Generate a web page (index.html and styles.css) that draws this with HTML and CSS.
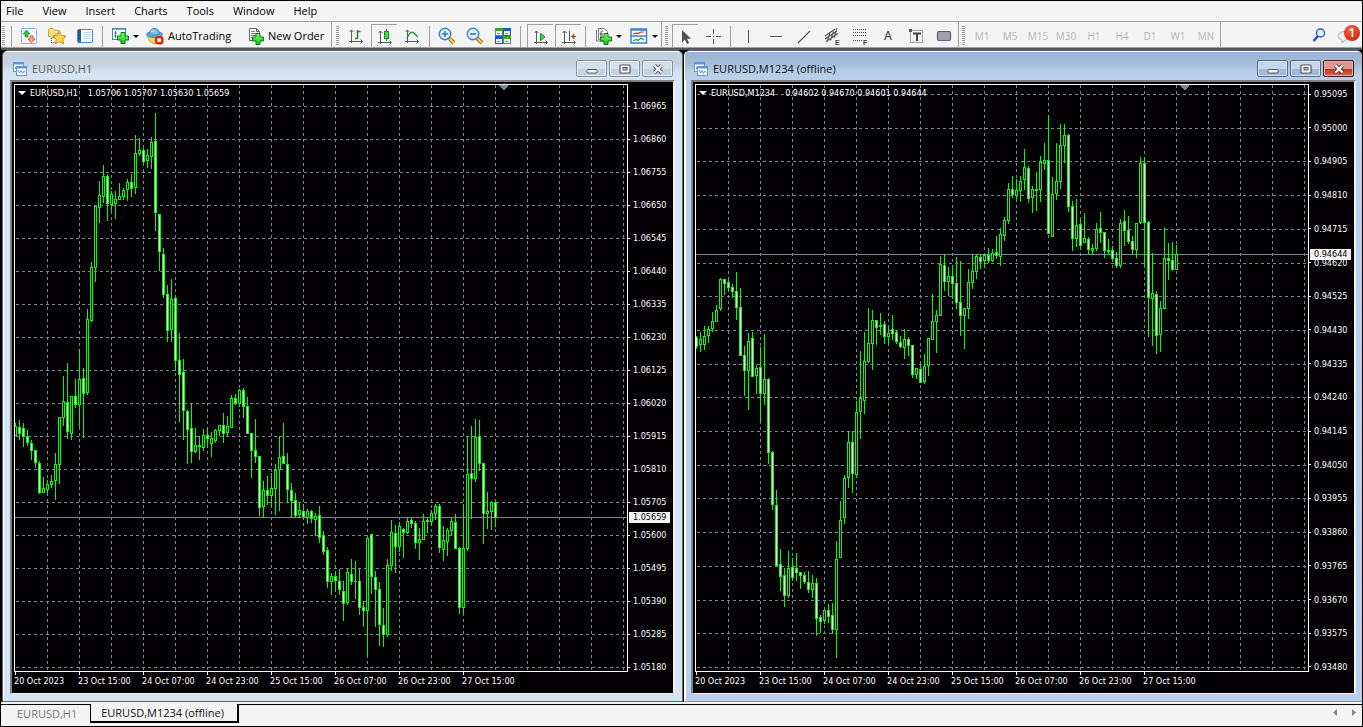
FILE: index.html
```html
<!DOCTYPE html>
<html lang="en">
<head>
<meta charset="utf-8">
<title>EURUSD,M1234 (offline)</title>
<link rel="stylesheet" href="styles.css">
</head>
<body>
<svg class="defs" aria-hidden="true">
  <defs>
    <linearGradient id="plusFill" x1="0" y1="0" x2="0" y2="1"><stop offset="0" stop-color="#7dff6a"/><stop offset="1" stop-color="#0fc41c"/></linearGradient>
    <symbol id="plus" viewBox="0 0 12 12"><path d="M4 .5h4V4h3.500v4H8v3.500H4V8H.5V4H4z" fill="url(#plusFill)" stroke="#0a7a12"/></symbol>
    <symbol id="chartwin" viewBox="0 0 14 14">
      <rect x=".5" y=".5" width="10" height="9" fill="#fff" stroke="#5c96e0"/><path d="M1 1.500h9" stroke="#5c96e0" stroke-width="2"/><path d="M2.500 7V5M4.500 6V4M6.500 5V4" stroke="#5c96e0"/>
      <rect x="3.500" y="4.500" width="10" height="9" fill="#fff" stroke="#5c96e0"/><path d="M4 5.500h9" stroke="#5c96e0" stroke-width="2"/><path d="M5 8l1.500 3L8 8.500 9.500 11.500 11 9l1 1.500" fill="none" stroke="#5c96e0"/>
    </symbol>
    <symbol id="axes" viewBox="0 0 16 16"><path d="M3.500 2v13M1 13.500h13M1.500 4l2-2 2 2M12.500 11.500l2 2-2 2" fill="none" stroke="#5a5a5a"/></symbol>
  </defs>
</svg>

<nav class="menubar">
  <button>File</button><button>View</button><button>Insert</button><button>Charts</button><button>Tools</button><button>Window</button><button>Help</button>
</nav>

<div class="toolbar">
  <div class="group">
    <span class="grip"></span><span class="sep"></span>
    <button class="tool" aria-label="Market Watch"><svg width="18" height="18" viewBox="0 0 18 18"><rect x="1.500" y="1.500" width="15" height="15" rx="1" fill="#fdfdff" stroke="#7fb2e0"/><path d="M6.500 3l3.500 4H8v3H5V7H3z" fill="#2fc23a" stroke="#0f8a1c" stroke-width=".7"/><path d="M11.500 15.500L8 12h2V9h3v3h2z" fill="#ffb09a" stroke="#e0401f" stroke-width=".9"/></svg></button>
    <button class="tool" aria-label="Navigator"><svg width="20" height="18" viewBox="0 0 20 18"><path d="M1.500 9.500v-7l1-1h4l1 2h4.500v3h-3l-2 4z" fill="#f8df84" stroke="#c9a13a"/><path d="M4.500 11v6M4.500 15.500h3" stroke="#555" stroke-dasharray="1 1"/><path d="M12.500 4.500l2 4 4.500.6-3.300 3.100.8 4.500-4-2.200-4 2.200.8-4.500L6 9.100l4.500-.6z" fill="#ffd84f" stroke="#b98a1e"/></svg></button>
    <button class="tool" aria-label="Terminal"><svg width="18" height="18" viewBox="0 0 18 18"><rect x="1.500" y="2.500" width="15" height="13" rx="1.500" fill="#fff" stroke="#4a87c4"/><path d="M3.500 2.500v13" stroke="#2c639f" stroke-width="3"/><path d="M2 5h3M2 8h3M2 11h3" stroke="#173d6d"/><path d="M7 5.500h8M7 7.500h8M7 9.500h8M7 11.500h8" stroke="#c3dbf2"/></svg></button>
    <span class="sep"></span>
    <button class="tool combo" aria-label="New chart"><svg width="18" height="18" viewBox="0 0 18 18"><rect x="1.500" y="1.500" width="13" height="11" fill="#fdfeff" stroke="#3f86bb"/><path d="M2 2.500h12" stroke="#79b7e0"/><path d="M4.500 4v7M3 6h3M3 9h3" stroke="#5a7f96"/><use href="#plus" x="6" y="5" width="12" height="12"/></svg><i class="arrow"></i></button>
    <button class="tool wide auto"><svg width="18" height="18" viewBox="0 0 18 18"><path d="M1.500 8.500l2 6 5 2.500 6-3 1.500-5.500z" fill="#f2d35c" stroke="#cda738"/><ellipse cx="8.500" cy="7.500" rx="8" ry="3" fill="#5fa9dd" stroke="#3982bd"/><path d="M3.500 7C3.500-.5 13 -.5 13.500 7c-3 1.500-7 1.500-10 0z" fill="#7cc0ea" stroke="#3982bd"/><path d="M5 4h3" stroke="#c9e9fa" stroke-width="1.500"/><rect x="9" y="9" width="8.500" height="8.500" rx="3" fill="#d92a12"/><rect x="11.500" y="11.500" width="3.500" height="3.500" fill="#fff"/></svg>AutoTrading</button>
    <button class="tool wide order"><svg width="16" height="18" viewBox="0 0 16 18"><path d="M1.500 1.500h7l3 3v9h-10z" fill="#fff" stroke="#666"/><path d="M8.500 1.500v3h3" fill="none" stroke="#666"/><path d="M3 4.500h4M3 6.500h6M3 8.500h6M3 10.500h4" stroke="#777"/><use href="#plus" x="4" y="6" width="12" height="12"/></svg>New Order</button>
  </div>
  <div class="group charting">
    <span class="grip"></span>
    <button class="tool" aria-label="Bar chart"><svg width="16" height="16" viewBox="0 0 16 16"><use href="#axes" width="16" height="16"/><path d="M9.500 2v9M9.500 3.500h3M7 10.500h2" stroke="#1a8f28" stroke-width="1.500"/></svg></button>
    <button class="tool on" aria-label="Candlesticks"><svg width="16" height="16" viewBox="0 0 16 16"><use href="#axes" width="16" height="16"/><path d="M9.500 0v12" stroke="#1a8f28"/><rect x="7.500" y="2.500" width="4" height="7" fill="#37e048" stroke="#138a20"/></svg></button>
    <button class="tool" aria-label="Line chart"><svg width="16" height="16" viewBox="0 0 16 16"><use href="#axes" width="16" height="16"/><path d="M3 10c3-6 5-7 7-5l4 4" fill="none" stroke="#1a8f28" stroke-width="1.300"/></svg></button>
    <span class="sep"></span>
    <button class="tool" aria-label="Zoom in"><svg width="18" height="18" viewBox="0 0 18 18"><path d="M11 11l5 5" stroke="#a87912" stroke-width="4"/><path d="M11 11l5 5" stroke="#f3cf53" stroke-width="2"/><circle cx="7" cy="7" r="5.700" fill="#dff2ff" stroke="#3b86cc" stroke-width="1.500"/><path d="M4 7h6M7 4v6" stroke="#3d7f9c" stroke-width="1.600"/></svg></button>
    <button class="tool" aria-label="Zoom out"><svg width="18" height="18" viewBox="0 0 18 18"><path d="M11 11l5 5" stroke="#a87912" stroke-width="4"/><path d="M11 11l5 5" stroke="#f3cf53" stroke-width="2"/><circle cx="7" cy="7" r="5.700" fill="#dff2ff" stroke="#3b86cc" stroke-width="1.500"/><path d="M4 7h6" stroke="#3d7f9c" stroke-width="1.600"/></svg></button>
    <button class="tool" aria-label="Tile windows"><svg width="16" height="16" viewBox="0 0 16 16"><path d="M0 0h8v8H0zM8 8h8v8H8z" fill="#45a31f"/><path d="M8 0h8v8H8zM0 8h8v8H0z" fill="#1f55c8"/><path d="M1 3h6v4H1zM9 3h6v4H9zM1 11h6v4H1zM9 11h6v4H9z" fill="#eef6ff"/><path d="M2 5.500h3M10 5.500h3M2 13.500h3M10 13.500h3" stroke="#6b9ad0"/></svg></button>
    <span class="sep"></span>
    <span class="pair">
    <button class="tool on" aria-label="Auto scroll"><svg width="16" height="16" viewBox="0 0 16 16"><use href="#axes" width="16" height="16"/><path d="M7.500 4.500v7l4.500-3.500z" fill="#3ddb4c" stroke="#138a20"/></svg></button>
    <button class="tool on" aria-label="Chart shift"><svg width="16" height="16" viewBox="0 0 16 16"><use href="#axes" width="16" height="16"/><path d="M8.500 2v10" stroke="#1d5f9c"/><path d="M15 7.500h-3" stroke="#c03a15" stroke-width="1.500"/><path d="M10 7.500l3-3v6z" fill="#c03a15"/></svg></button>
    </span>
    <span class="sep"></span>
    <button class="tool combo" aria-label="Indicators"><svg width="18" height="18" viewBox="0 0 18 18"><path d="M4.500 1.500h6l3 3v8h-9z" fill="#fff" stroke="#777"/><path d="M2.500 3v11h9" fill="none" stroke="#777"/><path d="M9 4c-2-.5-2 1-2 3v4M5.500 7H9" fill="none" stroke="#444"/><use href="#plus" x="6" y="6" width="12" height="12"/></svg><i class="arrow"></i></button>
    <button class="tool combo" aria-label="Templates"><svg width="18" height="16" viewBox="0 0 18 16"><rect x="1" y="1" width="15.500" height="14" fill="#fff" stroke="#3a82c9" stroke-width="1.500"/><path d="M1 2h15.500M1 8h15.500" stroke="#3a82c9" stroke-width="1.500"/><path d="M3 6l3-1 2 .5L11 4h3" fill="none" stroke="#a5371d" stroke-width="1.200"/><path d="M3 13l3-1.500 2 1 3-2.500 3 2" fill="none" stroke="#2c9840" stroke-width="1.200"/></svg><i class="arrow"></i></button>
  </div>
  <div class="group">
    <span class="grip"></span>
    <button class="tool on" aria-label="Cursor"><svg width="16" height="16" viewBox="0 0 16 16"><path d="M4 1v12.500l3-3 2 4.500 2-1-2-4.300h4z" fill="#4d4d57"/></svg></button>
    <button class="tool" aria-label="Crosshair"><svg width="16" height="16" viewBox="0 0 16 16"><path d="M8.500 1v5M8.500 11v5M1 8.500h5M11 8.500h5M8 8.500h1" stroke="#555"/></svg></button>
    <span class="sep"></span>
    <button class="tool" aria-label="Vertical line"><svg width="16" height="16" viewBox="0 0 16 16"><path d="M8.500 2v13" stroke="#555"/></svg></button>
    <button class="tool" aria-label="Horizontal line"><svg width="16" height="16" viewBox="0 0 16 16"><path d="M2 8.500h12" stroke="#555"/></svg></button>
    <button class="tool" aria-label="Trendline"><svg width="16" height="16" viewBox="0 0 16 16"><path d="M2 15L14 3" stroke="#555" stroke-width="1.200"/></svg></button>
    <button class="tool" aria-label="Channel"><svg width="16" height="18" viewBox="0 0 16 18"><path d="M1 9L11 2M1 12L13 4M2 14.500L14 6.500M3 15l3-9M6.500 13.500l3-9M10 11l3-10" stroke="#55555c" stroke-width="1.100"/><text x="11" y="17.500" class="mini">E</text></svg></button>
    <button class="tool" aria-label="Fibonacci"><svg width="16" height="18" viewBox="0 0 16 18"><path d="M1 2.500h14M1 5.500h14M1 8.500h14M1 13.500h9" stroke="#555" stroke-dasharray="1 1"/><text x="11" y="17.500" class="mini">F</text></svg></button>
    <button class="tool letter" aria-label="Text">A</button>
    <button class="tool" aria-label="Text label"><svg width="16" height="16" viewBox="0 0 16 16"><rect x="2.500" y="2.500" width="12" height="12" fill="none" stroke="#555" stroke-dasharray="1 1"/><path d="M1 1h3v3H1z" fill="#555"/><path d="M5 5.500h8M9 5v8" stroke="#444" stroke-width="2"/></svg></button>
    <button class="tool" aria-label="Rectangle"><svg width="16" height="16" viewBox="0 0 16 16"><rect x="1.500" y="3.500" width="13" height="9" rx="1.500" fill="#a2a2aa" stroke="#5c5c62" stroke-width="1.200"/></svg></button>
  </div>
  <div class="group frames">
    <span class="grip"></span>
    <button disabled>M1</button><button disabled>M5</button><button disabled>M15</button><button disabled>M30</button><button disabled>H1</button><button disabled>H4</button><button disabled>D1</button><button disabled>W1</button><button disabled>MN</button>
  </div>
  <div class="right-tools">
    <button class="tool" aria-label="Search"><svg width="14" height="14" viewBox="0 0 14 14"><path d="M6 8l-4.500 5" stroke="#2450c0" stroke-width="2.600"/><circle cx="8.500" cy="5" r="4" fill="#e9f3ff" stroke="#2a5bd0" stroke-width="1.500"/></svg></button>
    <button class="tool chat" aria-label="Messages"><svg width="16" height="14" viewBox="0 0 16 14"><path d="M7 1.500c9-1 9 8 1 8.500l-3 3v-3C-.5 8.500 0 2.500 7 1.500z" fill="#ececec" stroke="#aaa"/></svg><span class="badge">1</span></button>
  </div>
</div>

<main class="desk">
  <section class="win">
    <header class="title"><svg width="14" height="14"><use href="#chartwin"/></svg><h2>EURUSD,H1</h2>
      <div class="caps">
        <button aria-label="Minimize"><svg width="12" height="10" viewBox="0 0 12 10"><rect x="1" y="5.500" width="10" height="3.500" rx="1" fill="#fff" stroke="#50565e"/></svg></button>
        <button aria-label="Maximize"><svg width="12" height="10" viewBox="0 0 12 10"><rect x="1" y="1" width="10" height="8" rx="1" fill="#fff" stroke="#50565e" stroke-width="1.200"/><rect x="4" y="3.500" width="4" height="2.500" fill="#b8c8da" stroke="#50565e"/></svg></button>
        <button aria-label="Close"><svg width="12" height="10" viewBox="0 0 12 10"><path d="M2.500 1.500l7 7M9.500 1.500l-7 7" stroke="#50565e" stroke-width="4"/><path d="M2.500 1.500l7 7M9.500 1.500l-7 7" stroke="#fff" stroke-width="2"/></svg></button>
      </div>
    </header>
    <div class="client" id="h1"></div>
  </section>
  <section class="win active">
    <header class="title"><svg width="14" height="14"><use href="#chartwin"/></svg><h2>EURUSD,M1234 (offline)</h2>
      <div class="caps">
        <button aria-label="Minimize"><svg width="12" height="10" viewBox="0 0 12 10"><rect x="1" y="5.500" width="10" height="3.500" rx="1" fill="#fff" stroke="#50565e"/></svg></button>
        <button aria-label="Maximize"><svg width="12" height="10" viewBox="0 0 12 10"><rect x="1" y="1" width="10" height="8" rx="1" fill="#fff" stroke="#50565e" stroke-width="1.200"/><rect x="4" y="3.500" width="4" height="2.500" fill="#b8c8da" stroke="#50565e"/></svg></button>
        <button class="close" aria-label="Close"><svg width="12" height="10" viewBox="0 0 12 10"><path d="M2.500 1.500l7 7M9.500 1.500l-7 7" stroke="#50404a" stroke-width="4"/><path d="M2.500 1.500l7 7M9.500 1.500l-7 7" stroke="#fff" stroke-width="2"/></svg></button>
      </div>
    </header>
    <div class="client" id="m1234"></div>
  </section>
</main>

<footer class="tabs">
  <button class="tab">EURUSD,H1</button><button class="tab current">EURUSD,M1234 (offline)</button>
  <div class="scroll"><button aria-label="Scroll left"><svg width="4" height="7"><path d="M4 0v7L0 3.500z" fill="#888"/></svg></button><button aria-label="Scroll right"><svg width="4" height="7"><path d="M0 0v7l4-3.500z" fill="#888"/></svg></button></div>
</footer>
<script src="charts.js"></script>
</body>
</html>
```
FILE: styles.css
```css
* { box-sizing: border-box; }
body {
  margin: 0;
  min-height: 100vh;
  display: flex;
  flex-direction: column;
  border: 1px solid #000;
  background: #f4f4f4;
  color: #000;
  font-family: "Open Sans", "Noto Sans", sans-serif;
  font-size: 11px;
  line-height: 16px;
}
button { margin: 0; padding: 0; border: 0; background: none; font: inherit; color: inherit; }
.defs { position: absolute; width: 0; height: 0; }

.menubar { display: flex; height: 21px; border-bottom: 1px solid #a0a0a0; }
.menubar button { padding: 0 10px 0 9px; }
.menubar button:first-child { padding-left: 5px; }

.toolbar { display: flex; height: 28px; border-bottom: 2px solid #555; box-shadow: inset 0 -1px #a0a0a0; }
.group { display: flex; align-items: center; padding-top: 2px; border-right: 1px solid #a0a0a0; }
.group + .group { padding-left: 2px; }
.group + .charting { padding-left: 3px; }
.grip {
  width: 3px;
  height: 20px;
  margin: 0 3px 0 1px;
  background: repeating-linear-gradient(#a0a0a0 0 1px, transparent 1px 2px);
}
.sep { width: 1px; height: 21px; margin: 0 3px; background: #a0a0a0; }
.tool { display: flex; align-items: center; justify-content: center; width: 28px; height: 24px; }
.tool.on { width: 26px; margin: 0 1px; border-top: 1px solid #a0a0a0; border-left: 1px solid #a0a0a0; }
.tool.combo { width: 36px; gap: 4px; padding-left: 2px; }
.arrow { border: 3px solid transparent; border-top-color: #000; border-bottom: 0; }
.tool.wide { gap: 4px; justify-content: flex-start; white-space: nowrap; padding-left: 4px; }
.tool.auto { width: 102px; }
.tool.order { width: 87px; }
.pair { display: flex; padding-left: 2px; }
.letter { font-weight: 600; font-size: 12px; color: #555; }
.mini { font: bold 7px "Liberation Sans", sans-serif; fill: #444; }
.frames button { width: 28px; font-size: 10px; color: #b4b4b4; }
.right-tools { display: flex; align-items: center; gap: 3px; margin-left: auto; }
.right-tools .tool { width: 24px; }
.right-tools .chat { position: relative; justify-content: flex-start; width: 28px; padding: 4px 0 0 3px; }
.badge {
  position: absolute;
  top: 2px;
  right: 2px;
  width: 16px;
  height: 16px;
  border-radius: 50%;
  background: radial-gradient(circle at 40% 30%, #f0603e, #cf1c08);
  color: #fff;
  font-size: 12px;
  font-weight: 600;
}

.desk { display: flex; flex: 1; background: #000; gap: 1px; padding-left: 1px; }
.win {
  flex: 1;
  min-width: 0;
  display: flex;
  flex-direction: column;
  padding: 0 7px 7px;
  background: #d6e5f3;
  border: 1px solid #666;
  border-radius: 6px 6px 0 0;
  box-shadow: inset 1px 1px #fff;
}
.win.active { padding: 0 6px 7px; background: #bad0ea; border-color: #5a6a7a #22b8d8 #22b8d8 #fff; border-right: 0; }
.title {
  display: flex;
  align-items: center;
  gap: 5px;
  height: 29px;
  margin: 0 -7px;
  padding: 6px 9px 0 10px;
  border-radius: 5px 5px 0 0;
  background: linear-gradient(#fff 0 1px, #c2cfdd 1px, #c6d4e2 14px, #d3e2f0 20px, #d6e5f3);
}
.active .title { margin: 0 -6px; padding: 6px 8px 0 9px; background: linear-gradient(#fff 0 1px, #9ab5d2 1px, #a3bddb 14px, #b6cde8 20px, #bad0ea); }
.title h2 { margin: 0; font: inherit; color: #555; white-space: nowrap; }
.active .title h2 { color: #111; }
.caps { display: flex; gap: 2px; margin-left: auto; }
.caps button {
  display: flex;
  align-items: center;
  justify-content: center;
  width: 31px;
  height: 17px;
  border: 1px solid #8493a8;
  border-radius: 2px;
  background: linear-gradient(#d3dfea 50%, #c4d2e0 50%);
  box-shadow: inset 0 0 0 1px #e6eef6;
}
.active .caps button { border-color: #566a88; background: linear-gradient(#c5d6e9 50%, #9fb9d6 50%); box-shadow: inset 0 0 0 1px #d5e2f0; }
.active .caps .close { border-color: #4a1518; background: linear-gradient(#dc9a8c 50%, #b8321c 50%, #d06a4c); box-shadow: inset 0 0 0 1px #e8b0a4; }

.client {
  flex: 1;
  display: grid;
  grid-template-columns: 1fr 45px;
  grid-template-rows: auto 1fr;
  padding: 2px 0 0 2px;
  background: #020003;
  color: #fff;
  border: 2px solid #808080;
  border-right-color: #f0f0f0;
  border-bottom: 1px solid #f0f0f0;
  font: 9px/10px "DejaVu Sans Condensed", "Open Sans", sans-serif;
  white-space: nowrap;
}
.plot { position: relative; min-width: 0; border: 1px solid #fff; }
.plot svg { display: block; shape-rendering: crispEdges; }
.quote { position: absolute; top: 3px; left: 3px; display: flex; align-items: center; margin: 0; }
.quote i { margin-right: 4px; border: 4px solid transparent; border-top-color: #fff; border-bottom: 0; }
.quote b { margin-right: 10px; font-weight: 400; }
.prices { position: relative; display: flex; flex-direction: column; justify-content: space-between; padding-top: 17px; }
.active .prices { padding-top: 5px; }
.prices span { padding-left: 5px; background: linear-gradient(#fff, #fff) no-repeat 0 50% / 2px 1px; }
.prices .now { position: absolute; left: 1px; width: 41px; padding-left: 4px; background: #f4f4f4; color: #000; line-height: 11px; }
.times { display: flex; grid-column: 1 / -1; height: 20px; overflow: hidden; }
.times span { width: 64px; padding-top: 4px; background: linear-gradient(#fff, #fff) no-repeat 1px 0 / 1px 3px; }

.tabs { display: flex; height: 24px; background: linear-gradient(#f4f4f4 0 2px, #000 2px 3px, #f4f4f4 3px); }
.tab { margin-top: 2px; height: 19px; padding: 1px 13px 0 10px; color: #777; }
.tab:first-child { padding: 1px 13px 0 16px; }
.tab.current { background: #f4f4f4; color: #111; border: 1px solid #000; border-top: 0; border-right-width: 2px; border-bottom-width: 2px; }
.scroll { display: flex; align-items: center; gap: 15px; margin-left: auto; padding: 0 6px 4px 0; }
.scroll button { display: flex; }
```
FILE: charts.js
```js
// Bars are [high, body top, body bottom, low, falling?] in thirds of a pixel,
// measured down from the "from" line of their block.
const charts = {
  h1: {
    symbol: 'EURUSD,H1', quote: '1.05706 1.05707 1.05630 1.05659',
    now: '1.05659', nowY: 432,
    high: 1.06965, step: 0.00105, gridTop: 21, gridEnd: 582,
    blocks: [
      { from: 15, bars: [
        [969,979,1006,1006,0],[960,982,1000,1018,1],[970,985,1010,1040,1],[990,1009,1028,1036,1],[1020,1030,1051,1079,1],[1051,1051,1088,1103,1],
        [1084,1090,1178,1181,1],[1131,1165,1177,1177,0],[1141,1153,1168,1178,0],[1125,1144,1154,1163,0],[1060,1093,1142,1199,0],[951,952,1094,1151,0],
        [829,904,952,977,0],[790,907,994,1016,1],[889,889,1000,1018,0],[838,889,914,922,1],[748,838,913,979,0],[805,835,881,1013,1],
        [627,658,878,884,0],[487,502,661,665,0],[319,319,502,545,0],[244,286,322,368,0],[196,229,290,307,0],[223,229,310,362,1],
        [274,283,314,332,0],[274,298,310,356,0],[250,289,298,298,0],[265,271,290,298,0],[238,247,268,302,0],[223,247,266,290,1],
        [106,160,262,280,0],[115,151,160,166,0],[145,151,185,188,1],[148,166,182,203,0],[112,127,170,206,0],[40,124,338,391,1],
        [343,343,455,512,1],[446,463,584,592,1],[557,583,692,725,1],[538,598,689,725,0],[586,595,782,812,1],[700,781,824,965,1],
        [778,817,932,1018,1],[931,934,989,1091,1],[910,985,1055,1088,1],[985,1036,1055,1058,0],[1010,1036,1040,1079,0],[988,1006,1043,1052,0],
        [982,1006,1016,1036,1],[997,1015,1031,1070,0],[988,991,1022,1027,0],[976,976,991,1007,0],[940,976,1000,1028,1],[949,979,997,1006,0],
        [886,895,982,982,0],[882,895,910,913,1],[868,871,910,920,0],[865,871,919,952,1],[892,919,1000,1000,1],[1000,1000,1051,1133,1],
        [958,1051,1069,1088,1],[1069,1069,1222,1246,1] ] },
      { from: 285, bars: [
        [334,361,409,441,0],[319,361,377,404,1],[310,355,377,409,0],[283,300,355,434,0],[199,262,298,422,0],[160,259,281,281,1],
        [250,283,359,398,1],[340,361,392,442,1],[370,391,437,440,1],[398,421,434,442,0],[404,424,440,443,1],[418,424,442,461,0],
        [421,424,446,458,1],[430,439,448,496,0],[409,436,503,518,1],[484,497,545,554,1],[532,541,635,653,1],[610,619,635,674,0],
        [607,619,632,665,1],[598,634,659,674,1],[634,664,701,752,1],[595,607,698,704,0],[568,613,635,644,1],[574,634,635,686,0],
        [598,634,713,734,1],[695,712,722,770,1],[505,505,722,857,0],[493,493,620,671,1],[604,622,659,770,1],[637,658,764,827,1],
        [715,766,794,830,1],[568,586,794,800,0],[451,487,587,602,0],[466,490,530,608,1],[457,469,530,545,0],[475,478,488,563,1],
        [443,454,488,491,0],[443,451,461,473,1],[454,460,518,536,1],[475,508,518,569,0],[433,454,508,508,0],[445,451,455,488,0],
        [422,430,455,467,0],[404,409,430,449,0],[404,409,533,548,1],[469,511,539,572,0],[475,481,515,557,0],[443,454,482,497,0],
        [433,457,536,536,1],[533,536,713,731,1],[404,536,713,731,0],[199,313,536,542,0],[169,310,326,446,1],[148,202,326,335,0],
        [151,200,281,302,1],[280,280,431,521,1],[367,424,431,476,0],[394,397,425,479,0],[397,397,443,470,1] ] }
    ]
  },
  m1234: {
    symbol: 'EURUSD,M1234', quote: '0.94602 0.94670 0.94601 0.94644',
    now: '0.94644', nowY: 169,
    high: 0.95095, step: 0.00095, gridTop: 9, gridEnd: 582,
    blocks: [
      { from: 175, bars: [
        [229,233,260,266,1],[217,238,253,275,0],[199,229,253,269,0],[199,208,227,248,0],[157,184,206,215,0],[136,151,184,184,0],
        [55,58,146,151,0],[58,58,70,104,1],[61,67,83,92,1],[73,82,95,112,1],[37,94,143,179,1],[85,142,286,286,1],
        [259,286,332,407,1],[220,244,332,449,0],[217,235,349,349,1],[316,325,347,401,0],[262,322,401,485,1],[223,358,401,434,0],
        [355,358,578,611,1],[574,577,734,749,1],[691,737,917,917,1],[868,913,950,992,1],[925,946,1007,1040,1],[874,925,1007,1012,0],
        [895,922,953,962,1],[880,925,938,962,1],[937,937,947,986,1],[937,946,965,970,1],[934,967,989,998,1],[946,970,989,1013,0],
        [955,970,1076,1127,1],[1066,1072,1085,1118,1],[1050,1051,1081,1091,0],[1033,1051,1070,1088,1],[1030,1066,1109,1121,1],[844,898,1109,1193,0],
        [724,781,892,892,0],[646,655,773,791,0],[514,547,653,683,0],[514,547,641,698,1],[424,457,644,653,0],[274,415,455,536,0],
        [217,304,422,461,0],[145,250,304,308,0],[151,181,250,329,0],[181,181,203,254,1],[160,196,199,224,0],[184,193,230,251,1],
        [202,220,230,254,0],[166,208,220,239,1],[211,217,245,250,1],[229,247,260,263,1],[208,238,262,296,0],[232,238,257,287,1],
        [257,257,344,353,1],[325,325,344,356,0],[316,328,367,367,1],[283,319,365,371,0],[235,235,317,347,0],[103,184,238,238,0],
        [151,166,184,278,0] ] },
      { from: 15, bars: [
        [469,493,647,647,0],[463,496,545,572,1],[502,529,545,587,0],[496,529,550,596,1],[472,550,607,626,1],[484,607,647,707,1],
        [625,625,647,746,0],[508,547,626,656,0],[463,514,547,566,0],[463,469,514,536,0],[463,472,485,506,1],[463,466,482,503,0],
        [445,466,482,487,1],[448,460,482,485,0],[409,457,467,476,1],[385,403,470,497,0],[352,361,407,422,0],[250,268,362,371,0],
        [229,268,284,293,1],[238,271,287,296,0],[229,244,272,305,0],[148,202,238,269,0],[199,205,296,308,1],[259,268,293,338,0],
        [217,268,271,332,0],[169,187,269,305,0],[130,181,191,209,0],[45,181,401,401,1],[232,283,409,409,0],[130,244,281,299,0],
        [73,136,244,266,0],[73,106,136,188,0],[103,106,320,335,1],[304,319,416,452,1],[298,376,416,440,0],[361,373,437,449,1],
        [340,415,427,427,0],[412,418,448,461,1],[433,445,451,464,0],[370,388,445,452,0],[337,385,398,428,1],[397,397,451,473,1],
        [418,451,454,461,0],[439,451,476,485,1],[457,475,497,503,1],[358,370,497,503,0],[331,364,392,437,1],[349,391,425,431,1],
        [409,424,449,461,1],[370,370,449,473,0],[172,190,368,371,0],[175,190,368,496,1],[364,367,593,710,1],[460,580,596,737,0],
        [574,583,707,761,1],[604,625,704,755,0],[382,475,626,626,0],[430,475,482,539,1],[427,481,509,512,1],[436,463,509,509,0] ] }
    ]
  }
};
const times = ['20 Oct 2023', '23 Oct 15:00', '24 Oct 07:00', '24 Oct 23:00', '25 Oct 15:00', '26 Oct 07:00', '26 Oct 23:00', '27 Oct 15:00'];
const ROWS = 18;
const HEIGHT = 586;
const GRID = 'stroke="#778899" stroke-dasharray="3 3"';

const rect = (x, y, w, h, fill) => `<rect x="${x}" y="${y}" width="${w}" height="${h}" fill="${fill}"/>`;

function candle(x, from, [high, top, bottom, low, falling]) {
  const [h, t, b, l] = [high, top, bottom, low].map(v => from + Math.floor(v / 3));
  let out = rect(x, h, 1, l - h + 1, '#0f0') + rect(x - 1, t, 3, b - t + 1, '#0f0');
  if (b - t > 1) out += rect(x, t + 1, 1, b - t - 1, falling ? '#fff' : '#020003');
  return out;
}

function draw(id, c) {
  let svg = '';
  for (let x = 32; x < 2400; x += 32) svg += `<line x1="${x}.5" x2="${x}.5" y1="0" y2="${HEIGHT}" ${GRID}/>`;
  const gap = (c.gridEnd - c.gridTop) / (ROWS - 1);
  for (let i = 0; i < ROWS; i++) {
    const y = Math.round(c.gridTop + gap * i) + 0.5;
    svg += `<line x1="1" x2="100%" y1="${y}" y2="${y}" ${GRID}/>`;
  }
  svg += `<rect y="${c.nowY}" width="100%" height="1" fill="#778899"/>`;
  svg += '<path d="M484 0h9v1l-4 4h-1l-4-4z" fill="#778899"/>';
  let k = 0;
  for (const block of c.blocks) for (const bar of block.bars) svg += candle(4 * k++, block.from, bar);

  const labels = Array.from({ length: ROWS }, (_, i) => `<span>${(c.high - c.step * i).toFixed(5)}</span>`).join('');
  document.getElementById(id).innerHTML =
    `<div class="plot"><svg width="100%" height="${HEIGHT}">${svg}</svg><p class="quote"><i></i><b>${c.symbol}</b>${c.quote}</p></div>` +
    `<div class="prices">${labels}<span class="now" style="top:${c.nowY - 4}px">${c.now}</span></div>` +
    `<div class="times">${times.map(t => `<span>${t}</span>`).join('')}</div>`;
}
for (const id in charts) draw(id, charts[id]);
```
